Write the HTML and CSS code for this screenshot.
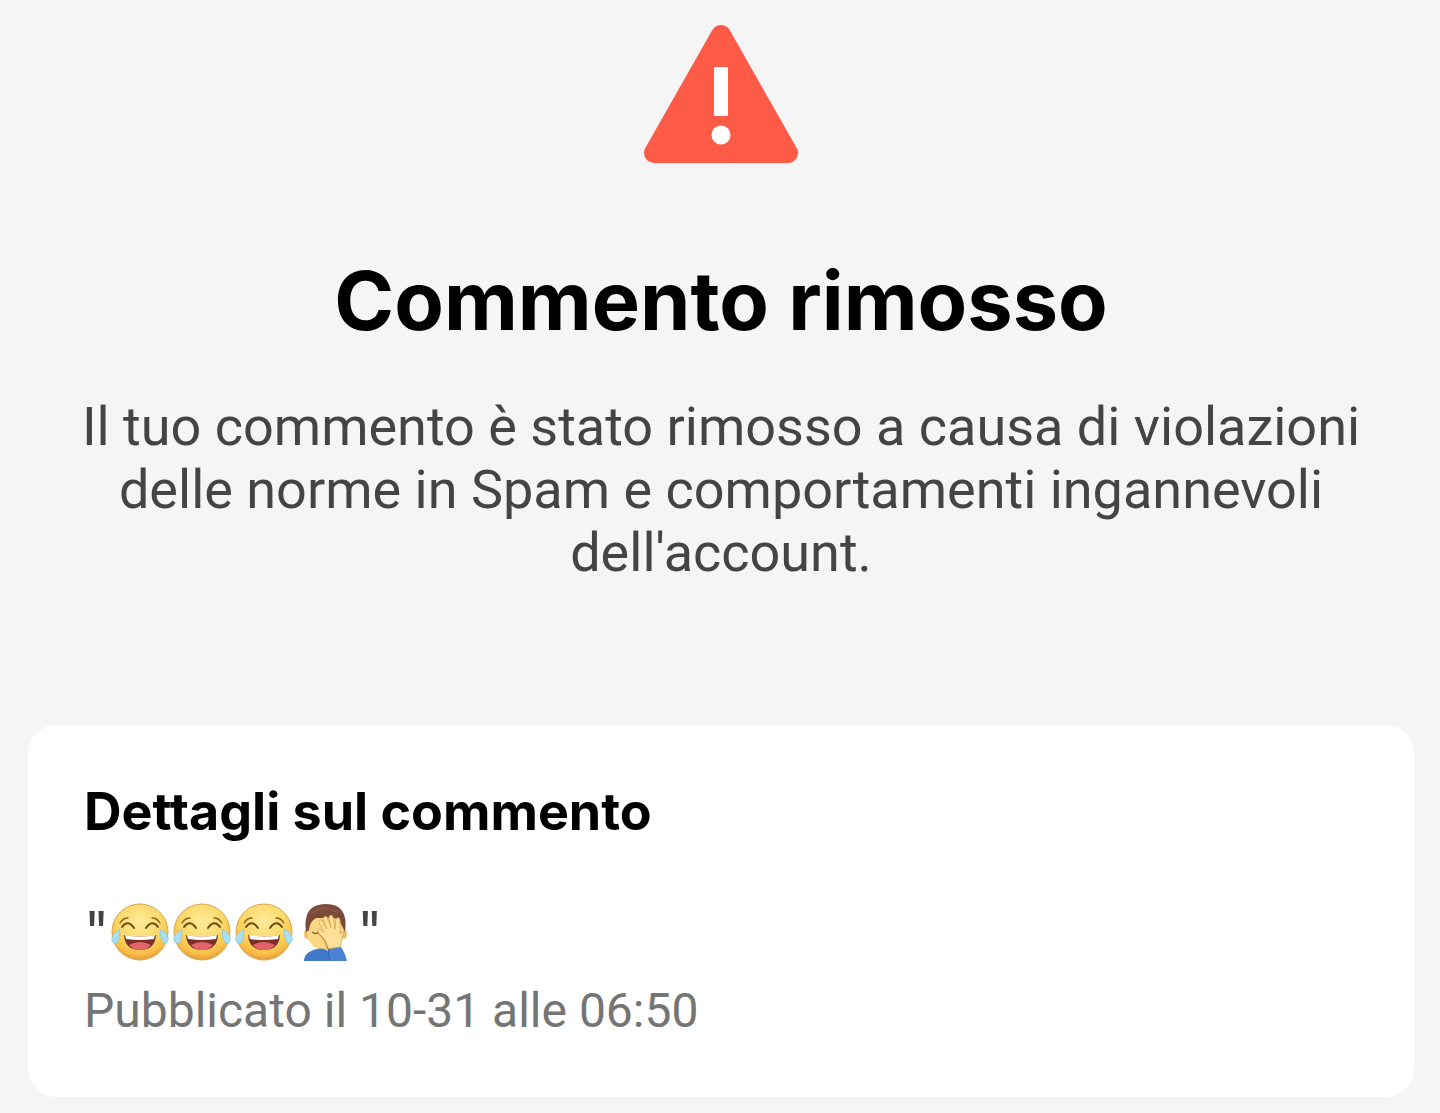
FILE: index.html
```
<!DOCTYPE html>
<html lang="it">
<head>
    <meta charset="UTF-8">
    <meta name="viewport" content="width=device-width, initial-scale=1.0">
    <title>Commento rimosso</title>
    <link rel="stylesheet" href="styles.css">
</head>
<body>
    <!-- Emoji shapes -->
    <svg class="defs" aria-hidden="true">
        <defs>
            <radialGradient id="skin" cx="50%" cy="32%" r="68%">
                <stop offset="0" stop-color="#ffeb9c"/>
                <stop offset="0.55" stop-color="#fbd968"/>
                <stop offset="0.85" stop-color="#f8bd45"/>
                <stop offset="1" stop-color="#e29a3c"/>
            </radialGradient>
            <symbol id="joy" viewBox="0 0 62 60">
                <circle cx="31" cy="31" r="28" fill="url(#skin)" stroke="#d9a450" stroke-width="1"/>
                <path d="M11 22q3-5 8-5M51 22q-3-5-8-5" fill="none" stroke="#86611f" stroke-width="1.3" stroke-linecap="round"/>
                <path d="M13 26q6-8 12 1M37 27q6-9 12-1" fill="none" stroke="#6c4b18" stroke-width="2" stroke-linecap="round"/>
                <path d="M15 34Q31 37 47 34Q46 49 31 49Q16 49 15 34z" fill="#7a3029"/>
                <path d="M20 44q11-6 22 0q-4 5-11 5t-11-5z" fill="#e2646a"/>
                <path d="M16 34Q31 37 46 34L45 38Q31 40 17 38z" fill="#fff"/>
                <path d="M11 28Q1 34 3 40q3 5 6 0q2-4 2-12zM51 28q10 6 8 12q-3 5-6 0q-2-4-2-12z" fill="#a9dff0" stroke="#7cc3dc" stroke-width="0.6"/>
            </symbol>
            <symbol id="facepalm" viewBox="0 0 62 60">
                <ellipse cx="12" cy="33" rx="3" ry="5" fill="#efbd66"/>
                <ellipse cx="49" cy="33" rx="3" ry="5" fill="#efbd66"/>
                <path d="M12 22q0-15 18-15t18 15v11q-2 15-18 17Q14 47 12 33z" fill="#fad782"/>
                <path d="M11 31Q7 3 31 3Q54 3 50 31l-4-8q-2-6-8-6H21q-6 3-7 12z" fill="#7c4a3b"/>
                <path d="M17 12Q30 3 43 12" fill="none" stroke="#8b5545" stroke-width="2"/>
                <path d="M17 31q4 3 7 0" fill="none" stroke="#8a642f" stroke-width="1.3"/>
                <path d="M9 60q0-9 13-12q7-2 12 3l1 9z" fill="#4278ca"/>
                <path d="M34 60q-3-9 0-13l11-2q5 6 7 15z" fill="#4c82d4"/>
                <path d="M34 47q-2 6 1 13" fill="none" stroke="#2e5da9"/>
                <path d="M32 48q-1-8-8-15q-3-6 1-5l4 3-5-9q0-4 3-3l5 9-4-10q1-4 4-2l4 11-2-11q2-4 4 0l2 12 1-10q3-3 4 1l0 14 1-2q3-1 2 3l-3 12z" fill="#ffe098" stroke="#d7a54f" stroke-width="0.8" stroke-linejoin="round"/>
                <path d="M23 32Q31 38 33 48" fill="none" stroke="#b88440" stroke-width="1"/>
            </symbol>
        </defs>
    </svg>

    <main class="page">
        <header class="notice">
            <svg class="warning" viewBox="0 0 154 138" role="img" aria-label="Avviso">
                <path d="M77 10L144 128H10z" fill="#fe5a48" stroke="#fe5a48" stroke-width="20" stroke-linejoin="round"/>
                <rect x="70" y="42" width="14" height="49" rx="1" fill="#fff"/>
                <circle cx="77" cy="110" r="9.5" fill="#fff"/>
            </svg>
            <h1>Commento rimosso</h1>
            <p class="reason">Il tuo commento è stato rimosso a causa di violazioni delle norme in Spam e comportamenti ingannevoli dell'account.</p>
        </header>

        <section class="card">
            <h2>Dettagli sul commento</h2>
            <p class="comment">
                <span class="quote">"</span>
                <svg class="emoji" role="img" aria-label="Faccina che ride con le lacrime"><use href="#joy"/></svg>
                <svg class="emoji" role="img" aria-label="Faccina che ride con le lacrime"><use href="#joy"/></svg>
                <svg class="emoji" role="img" aria-label="Faccina che ride con le lacrime"><use href="#joy"/></svg>
                <svg class="emoji" role="img" aria-label="Uomo esasperato"><use href="#facepalm"/></svg>
                <span class="quote">"</span>
            </p>
            <p class="date">Pubblicato il 10-31 alle 06:50</p>
        </section>
    </main>
</body>
</html>
```
FILE: styles.css
```
* {
    box-sizing: border-box;
}

body {
    margin: 0;
    background-color: #f5f5f5;
    color: #000;
    font-family: Roboto, "Liberation Sans", sans-serif;
}

h1, h2, p {
    margin: 0;
}

.defs {
    display: block;
    width: 0;
    height: 0;
}

.page {
    padding: 25px 26px 16px 28px;
}

.notice {
    display: flex;
    flex-direction: column;
    align-items: center;
    padding: 0 40px;
    text-align: center;
}

.warning {
    width: 154px;
    height: 138px;
}

h1 {
    margin-top: 88px;
    font-family: Inter, sans-serif;
    font-size: 81px;
    font-weight: 700;
    line-height: 100px;
}

.reason {
    margin-top: 44px;
    color: #444;
    font-size: 54px;
    line-height: 63px;
}

.card {
    margin-top: 141px;
    padding: 56px;
    background-color: #fff;
    border-radius: 28px;
}

h2 {
    font-family: Inter, sans-serif;
    font-size: 52px;
    font-weight: 700;
    line-height: 62px;
}

.comment {
    display: flex;
    align-items: center;
    margin-top: 56px;
    color: #444;
    font-size: 54px;
    line-height: 64px;
}

.quote {
    font-family: Inter, sans-serif;
}

.emoji {
    width: 62px;
    height: 60px;
}

.date {
    margin-top: 18px;
    color: #757575;
    font-size: 48px;
    line-height: 60px;
}
```
